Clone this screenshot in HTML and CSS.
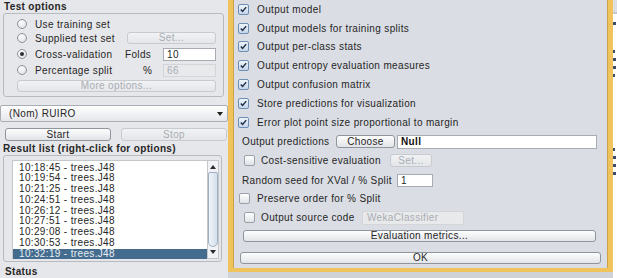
FILE: index.html
```html
<!DOCTYPE html>
<html lang="en">
<head>
    <meta charset="UTF-8">
    <title>Weka Explorer - Classifier evaluation options</title>
    <link rel="stylesheet" href="styles.css">
</head>
<body>
    <div class="explorer">
        <div class="panel-title">Test options</div>
        <div class="group test-options">
            <div class="opt-row first">
                <span class="radio"></span><span class="opt-label">Use training set</span>
            </div>
            <div class="opt-row">
                <span class="radio"></span><span class="opt-label">Supplied test set</span>
                <button class="btn disabled set-btn">Set...</button>
            </div>
            <div class="opt-row">
                <span class="radio on"></span><span class="opt-label">Cross-validation</span>
                <span class="small-label">Folds</span><span class="field">10</span>
            </div>
            <div class="opt-row">
                <span class="radio"></span><span class="opt-label">Percentage split</span>
                <span class="small-label pct">%</span><span class="field disabled">66</span>
            </div>
            <button class="btn disabled more-btn">More options...</button>
        </div>

        <div class="combo">(Nom) RUIRO<span class="combo-arrow"></span></div>

        <div class="run-row">
            <button class="btn run-btn">Start</button>
            <button class="btn disabled run-btn">Stop</button>
        </div>

        <div class="panel-title result-title">Result list (right-click for options)</div>
        <div class="group results">
            <ul class="result-list">
                <li>10:18:45 - trees.J48</li>
                <li>10:19:54 - trees.J48</li>
                <li>10:21:25 - trees.J48</li>
                <li>10:24:51 - trees.J48</li>
                <li>10:26:12 - trees.J48</li>
                <li>10:27:51 - trees.J48</li>
                <li>10:29:08 - trees.J48</li>
                <li>10:30:53 - trees.J48</li>
                <li class="selected">10:32:19 - trees.J48</li>
            </ul>
            <div class="scrollbar">
                <span class="arrow up"></span>
                <span class="thumb"></span>
                <span class="arrow down"></span>
            </div>
        </div>

        <div class="panel-title status">Status</div>
    </div>

    <div class="dialog-col">
        <div class="dialog">
            <div class="check-row"><span class="check on"><svg viewBox="0 0 11 11"><path d="M2.2 5.6 L4.4 7.9 L8.8 2.6"/></svg></span>Output model</div>
            <div class="check-row"><span class="check on"><svg viewBox="0 0 11 11"><path d="M2.2 5.6 L4.4 7.9 L8.8 2.6"/></svg></span>Output models for training splits</div>
            <div class="check-row"><span class="check on"><svg viewBox="0 0 11 11"><path d="M2.2 5.6 L4.4 7.9 L8.8 2.6"/></svg></span>Output per-class stats</div>
            <div class="check-row"><span class="check on"><svg viewBox="0 0 11 11"><path d="M2.2 5.6 L4.4 7.9 L8.8 2.6"/></svg></span>Output entropy evaluation measures</div>
            <div class="check-row"><span class="check on"><svg viewBox="0 0 11 11"><path d="M2.2 5.6 L4.4 7.9 L8.8 2.6"/></svg></span>Output confusion matrix</div>
            <div class="check-row"><span class="check on"><svg viewBox="0 0 11 11"><path d="M2.2 5.6 L4.4 7.9 L8.8 2.6"/></svg></span>Store predictions for visualization</div>
            <div class="check-row"><span class="check on"><svg viewBox="0 0 11 11"><path d="M2.2 5.6 L4.4 7.9 L8.8 2.6"/></svg></span>Error plot point size proportional to margin</div>

            <div class="pred-row">
                <span class="pred-label">Output predictions</span>
                <button class="btn choose-btn">Choose</button>
                <span class="field null-field">Null</span>
            </div>

            <div class="cost-row">
                <span class="check"></span>
                <span class="cost-label">Cost-sensitive evaluation</span>
                <button class="btn disabled cost-btn">Set...</button>
            </div>

            <div class="seed-row">
                <span class="seed-label">Random seed for XVal / % Split</span>
                <span class="field seed-field">1</span>
            </div>

            <div class="preserve-row"><span class="check"></span>Preserve order for % Split</div>

            <div class="source-row">
                <span class="check"></span>
                <span class="source-label">Output source code</span>
                <span class="field disabled source-field">WekaClassifier</span>
            </div>

            <button class="btn eval-btn">Evaluation metrics...</button>
            <button class="btn ok-btn">OK</button>
        </div>
        <div class="dialog-shadow"></div>
    </div>

    <div class="behind">
        <div class="behind-top"></div>
        <div class="behind-text">
            <span style="width: 3px"></span>
            <span style="width: 2px; margin-top: 20px"></span>
            <span style="width: 3px"></span>
            <span style="width: 3px"></span>
            <span style="width: 2px"></span>
            <span style="width: 2px; margin-top: 66px"></span>
            <span style="width: 3px"></span>
            <span style="width: 3px"></span>
            <span style="width: 3px"></span>
        </div>
    </div>
</body>
</html>
```

FILE: styles.css
```css
body {
    margin: 0;
    width: 617px;
    height: 278px;
    overflow: hidden;
    display: flex;
    font-family: "Liberation Sans", Arial, sans-serif;
    font-size: 10px;
    letter-spacing: 0.35px;
    color: #262626;
    background-color: #e6e7ea;
}

button {
    font: inherit;
    letter-spacing: inherit;
    color: inherit;
    padding: 0;
}

/* ---------- explorer panel (left) ---------- */

.explorer {
    width: 228px;
    flex-shrink: 0;
    display: flex;
    flex-direction: column;
}

.panel-title {
    font-weight: bold;
    line-height: 12px;
    height: 13px;
    padding: 1px 0 0 4px;
    box-sizing: border-box;
}

.group {
    border: 1px solid #b7bbc1;
    border-radius: 3px;
    box-sizing: border-box;
}

.test-options {
    margin: 0 4px 0 3px;
    height: 84px;
    padding: 4px 0 0 13px;
}

.opt-row {
    display: grid;
    grid-template-columns: 18px 90px 38px 53px;
    align-items: center;
    height: 16px;
}

.opt-row.first {
    height: 12px;
}

.radio {
    width: 10px;
    height: 10px;
    border: 1px solid #8e949c;
    border-radius: 50%;
    box-sizing: border-box;
    background: radial-gradient(circle at 40% 35%, #ffffff, #d6d9de);
    position: relative;
}

.radio.on::after {
    content: "";
    position: absolute;
    left: 2px;
    top: 2px;
    width: 4px;
    height: 4px;
    border-radius: 50%;
    background-color: #2d2f33;
}

.small-label.pct {
    padding-left: 18px;
}

.btn {
    height: 12px;
    line-height: 10px;
    border: 1px solid #8f959d;
    border-radius: 3px;
    background: linear-gradient(#fdfdfd, #e2e4e8);
    text-align: center;
    box-sizing: border-box;
}

.btn.disabled {
    color: #a9adb3;
    border-color: #c7cace;
    background: linear-gradient(#f1f2f4, #e4e6e9);
}

.set-btn {
    grid-column: 3 / 5;
    margin-left: 2px;
    height: 12px;
}

.field {
    height: 13px;
    line-height: 12px;
    padding-left: 3px;
    background-color: #ffffff;
    border: 1px solid #a8acb2;
    box-sizing: border-box;
}

.field.disabled {
    background-color: #e8e9eb;
    border-color: #d3d5d9;
    color: #a9adb3;
}

.more-btn {
    margin-top: 2px;
    width: 199px;
}

.combo {
    position: relative;
    margin-top: 8px;
    height: 17px;
    line-height: 15px;
    padding-left: 8px;
    border: 1px solid #a9aeb5;
    border-radius: 2px;
    box-sizing: border-box;
    background: linear-gradient(#ffffff, #e4e6ea);
}

.combo-arrow {
    position: absolute;
    right: 4px;
    top: 6px;
    border-left: 3px solid transparent;
    border-right: 3px solid transparent;
    border-top: 4px solid #1f1f1f;
}

.run-row {
    display: flex;
    gap: 10px;
    margin-top: 6px;
    padding-left: 5px;
}

.run-btn {
    width: 106px;
    height: 13px;
    line-height: 11px;
}

.result-title {
    height: 14px;
    padding-top: 1.5px;
    padding-left: 3px;
}

.results {
    margin: 0 6px 0 3px;
    height: 107px;
    padding: 4px 0 0 8px;
    display: flex;
}

.result-list {
    list-style: none;
    margin: 0;
    padding: 1.5px 0 0 0;
    width: 195px;
    height: 99px;
    box-sizing: border-box;
    background-color: #ffffff;
    border: 1px solid #c3c7cc;
    border-right: none;
}

.result-list li {
    height: 10.75px;
    line-height: 10.75px;
    padding-left: 6px;
}

.result-list li.selected {
    background-color: #436c8f;
    color: #e9eef3;
}

.scrollbar {
    width: 12px;
    height: 99px;
    box-sizing: border-box;
    border: 1px solid #c3c7cc;
    background-color: #f0f2f5;
    display: flex;
    flex-direction: column;
    align-items: center;
}

.arrow {
    display: block;
    border-left: 3px solid transparent;
    border-right: 3px solid transparent;
}

.arrow.up {
    margin-top: 4px;
    border-bottom: 4px solid #2a2a2a;
}

.arrow.down {
    margin-top: 3px;
    border-top: 4px solid #2a2a2a;
}

.thumb {
    margin-top: 3px;
    width: 10px;
    height: 75px;
    box-sizing: border-box;
    border: 1px solid #9fb0c3;
    border-radius: 2px 2px 5px 5px;
    background: linear-gradient(90deg, #eef3f8, #d5e0ec);
}

.status {
    height: 16px;
    padding-top: 4px;
    padding-left: 5px;
}

/* ---------- evaluation options dialog ---------- */

.dialog-col {
    width: 385px;
    flex-shrink: 0;
    display: flex;
    flex-direction: column;
}

.dialog {
    height: 272px;
    box-sizing: border-box;
    background-color: #dadde3;
    border: 5px solid #f0c35d;
    border-top: none;
    border-bottom-width: 4px;
    box-shadow: inset 1px 0 0 #c9a24a, inset -1px 0 0 #c9a24a;
    display: flex;
    flex-direction: column;
    align-items: flex-start;
}

.dialog-shadow {
    flex-grow: 1;
    background-color: #cfd2d7;
}

.check-row {
    height: 18.8px;
    display: flex;
    align-items: center;
    padding-left: 5px;
}

.check {
    width: 11px;
    height: 11px;
    flex-shrink: 0;
    margin-right: 8px;
    box-sizing: border-box;
    border: 1px solid #9ba1a9;
    border-radius: 2px;
    background: linear-gradient(#ffffff, #dfe2e6);
}

.check.on {
    border-color: #6d8db3;
    background: linear-gradient(#eef4fb, #c6d6ea);
}

.check svg {
    display: block;
    width: 9px;
    height: 9px;
}

.check svg path {
    fill: none;
    stroke: #1b2c45;
    stroke-width: 1.7;
}

.pred-row {
    height: 20.4px;
    display: flex;
    align-items: center;
    padding-left: 9px;
}

.pred-label {
    width: 94px;
}

.choose-btn {
    width: 59px;
    height: 13px;
    line-height: 11px;
}

.null-field {
    margin-left: 2px;
    width: 200px;
    height: 14px;
    font-weight: bold;
    color: #111111;
}

.cost-row {
    height: 18px;
    display: flex;
    align-items: center;
    padding-left: 11px;
}

.cost-row .check,
.source-row .check {
    margin-right: 6px;
}

.cost-label {
    width: 129px;
}

.cost-btn {
    width: 42px;
    height: 13px;
    line-height: 11px;
}

.seed-row {
    height: 21px;
    display: flex;
    align-items: center;
    padding-left: 9px;
}

.seed-label {
    width: 155px;
}

.seed-field {
    width: 36px;
}

.preserve-row {
    height: 15px;
    display: flex;
    align-items: center;
    padding-left: 6px;
}

.preserve-row .check {
    margin-right: 7px;
}

.source-row {
    margin-top: 2px;
    height: 20px;
    display: flex;
    align-items: center;
    padding-left: 11px;
}

.source-label {
    width: 101px;
}

.source-field {
    width: 102px;
    height: 14px;
    padding-left: 4px;
}

.eval-btn {
    margin: 2px 0 0 10px;
    width: 353px;
}

.ok-btn {
    margin: 10px 0 0 7px;
    width: 361px;
}

/* ---------- explorer output visible behind the dialog ---------- */

.behind {
    flex-grow: 1;
    display: flex;
    flex-direction: column;
    background-color: #ffffff;
}

.behind-top {
    height: 12px;
    background-color: #dcdfe4;
    border-bottom: 2px solid #c4c8ce;
}

.behind-text {
    display: flex;
    flex-direction: column;
    gap: 5px;
    padding-top: 8px;
}

.behind-text span {
    display: block;
    height: 3px;
    background-color: #3b4d6b;
}
```
